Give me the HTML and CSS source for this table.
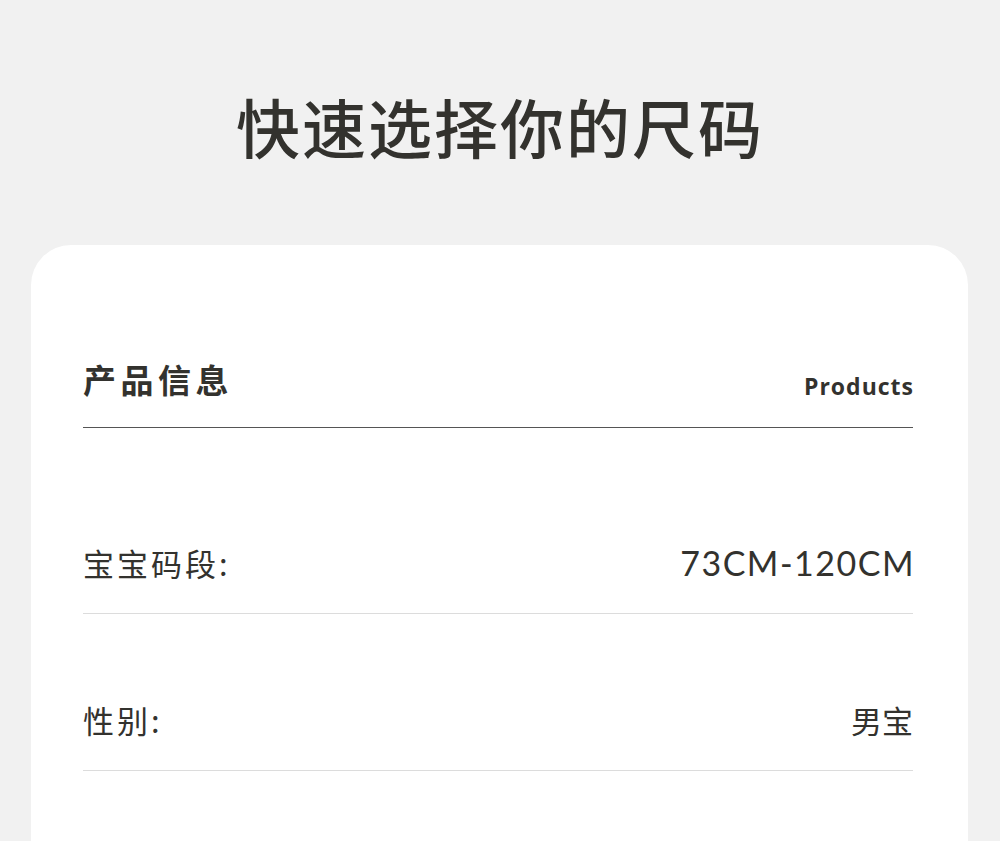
FILE: index.html
```html
<!DOCTYPE html>
<html lang="zh-CN">
<head>
    <meta charset="UTF-8">
    <meta name="viewport" content="width=device-width, initial-scale=1.0">
    <title>快速选择你的尺码</title>
    <link rel="stylesheet" href="styles.css">
</head>
<body>
    <h1 class="page-title">快速选择你的尺码</h1>

    <div class="card">
        <div class="card-header">
            <h2>产品信息</h2>
            <span class="card-header-en">Products</span>
        </div>

        <ul class="info-list">
            <li class="info-row">
                <span class="info-label">宝宝码段:</span>
                <span class="info-value info-value-num">73CM-120CM</span>
            </li>
            <li class="info-row">
                <span class="info-label">性别:</span>
                <span class="info-value">男宝</span>
            </li>
        </ul>
    </div>
</body>
</html>
```

FILE: styles.css
```css
body {
    font-family: "Noto Sans CJK SC", "Noto Sans", sans-serif;
    margin: 0;
    background: #f1f1f1;
    color: #33322e;
    height: 841px;
    overflow: hidden;
}
.page-title {
    margin: 0;
    padding: 87px 0 82px;
    text-align: center;
    font-size: 64px;
    line-height: 76px;
    font-weight: 500;
    letter-spacing: 2px;
}
.card {
    margin: 0 32px 0 31px;
    background: white;
    border-radius: 40px;
    padding: 112px 55px 200px 52px;
}
.card-header {
    display: flex;
    justify-content: space-between;
    align-items: flex-end;
    border-bottom: 1.5px solid #555;
    padding-bottom: 26px;
}
.card-header h2 {
    margin: 0;
    font-size: 33px;
    line-height: 44px;
    font-weight: 700;
    letter-spacing: 4.5px;
}
.card-header-en {
    font-family: "Open Sans", sans-serif;
    font-weight: 700;
    font-size: 23px;
    line-height: 30px;
    letter-spacing: 1px;
    margin-right: -1px;
}
.info-list {
    list-style: none;
    margin: 0;
    padding: 29px 0 0;
}
.info-row {
    display: flex;
    justify-content: space-between;
    align-items: center;
    height: 156px;
    padding: 0;
    border-bottom: 1px solid #dcdcdc;
}
.info-row span {
    margin-top: 56px;
}
.info-label {
    font-size: 31px;
    line-height: 40px;
    letter-spacing: 3px;
}
.info-value {
    font-size: 31px;
    line-height: 40px;
}
.info-value-num {
    font-family: "Lato", sans-serif;
    font-size: 34px;
    letter-spacing: 1.5px;
    margin-right: -2px;
}
```
